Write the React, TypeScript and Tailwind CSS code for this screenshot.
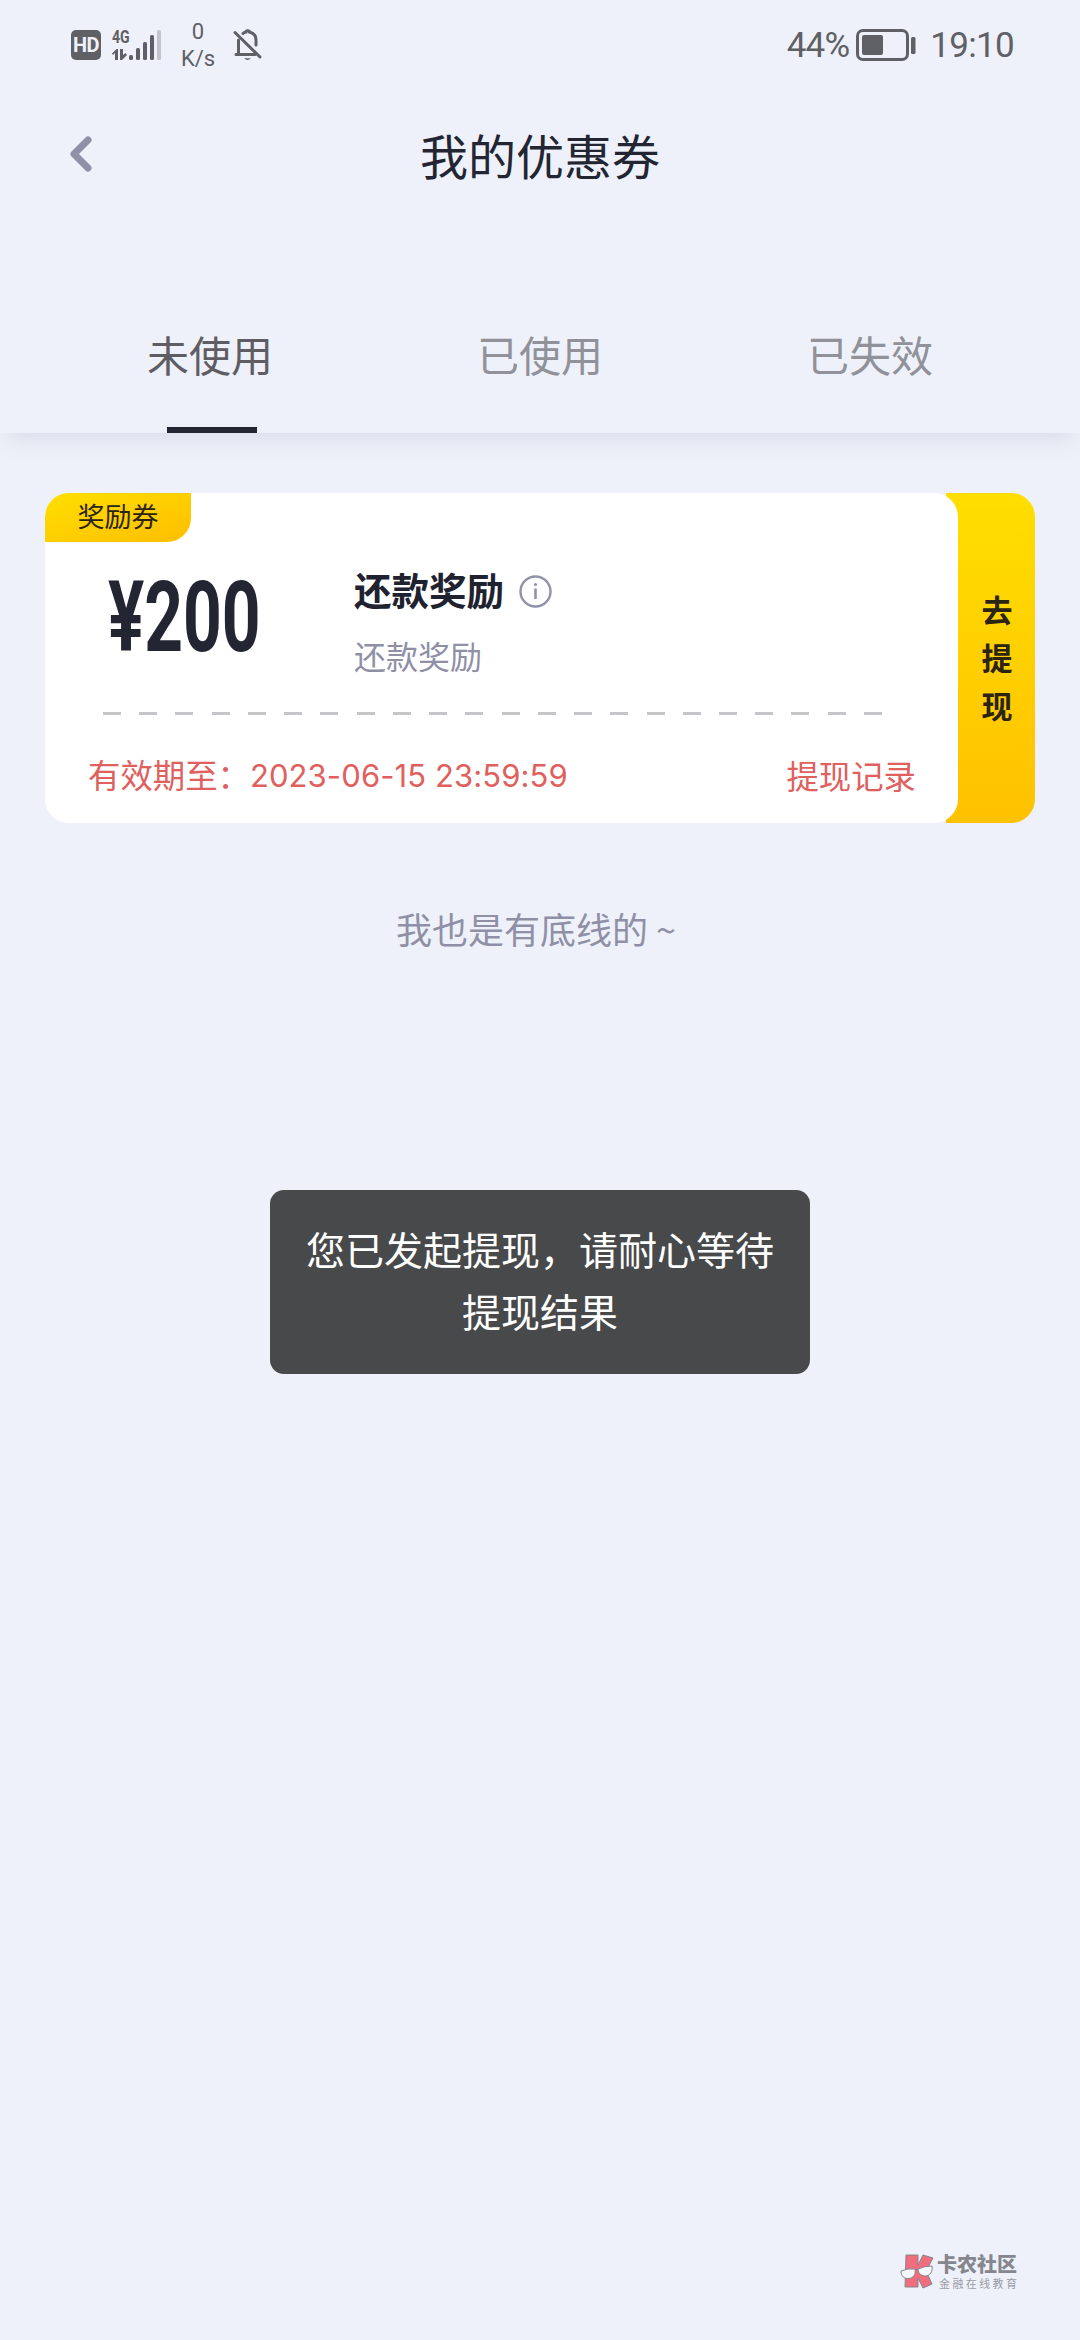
import { ChevronLeft } from 'lucide-react';

const tabs = [
  { label: '未使用', active: true },
  { label: '已使用', active: false },
  { label: '已失效', active: false },
];

function StatusBar() {
  return (
    <header className="h-[88px] flex items-center justify-between pl-[71px] pr-[66px] text-[#5e6066] font-['Roboto',sans-serif]">
      <div className="flex items-center h-full pt-[2px]">
        <div className="w-[30px] h-[30px] rounded-[5px] bg-[#5e6066] text-[#eef1f9] text-[20px] font-bold leading-[31px] text-center tracking-[-0.5px]">
          HD
        </div>
        <div className="ml-[11px] w-[50px] h-[32px] flex flex-col">
          <span className="block w-[30px] h-[15px] text-[19px] font-bold leading-[15px] origin-left scale-x-[0.74]">4G</span>
          <svg className="-mt-[15px]" width="50" height="32" viewBox="0 0 50 32" fill="#5e6066">
            <path d="M0 24.5 4.5 20H6v11H3v-7l-2 2zM8 20h3v6l2.5-2 1.5 2-5 5H8z" />
            <rect x="17" y="26" width="4" height="5" rx="1.5" />
            <rect x="24" y="19" width="4" height="12" rx="1.5" />
            <rect x="31" y="13" width="4" height="18" rx="1.5" />
            <rect x="38" y="6" width="4" height="25" rx="1.5" />
            <rect x="45" y="1" width="4" height="30" rx="1.5" fill="#c3c5cd" />
          </svg>
        </div>
        <div className="ml-[18px] w-[36px] flex flex-col text-center text-[22px] leading-[27px]">
          <span>0</span>
          <span>K/s</span>
        </div>
        <svg className="ml-[17px]" width="30" height="34" viewBox="0 0 30 34" fill="none" stroke="#5e6066" strokeWidth="3" strokeLinecap="round">
          <path d="M2 4.5 27 29" />
          <path d="M5.5 12v13.5M3 26.5h19" />
          <path d="M10 5.5c1-1 2.2-1.500 3-1.500 0-1.800 3.500-1.800 3.500 0 4 1 6.500 4 6.500 8v5" />
          <path d="M11 30.200h7q-3.500 3.600-7 0z" fill="#5e6066" stroke="none" />
        </svg>
      </div>
      <div className="flex items-center h-full pt-[2px]">
        <span className="pt-[2px] text-[35px] leading-[40px] tracking-[-0.800px]">44%</span>
        <svg className="ml-[7px]" width="61" height="34" viewBox="0 0 61 34" fill="none">
          <rect x="1.500" y="2.500" width="50" height="29" rx="5.500" stroke="#5e6066" strokeWidth="3" />
          <rect x="6" y="7" width="21" height="20" rx="2" fill="#5e6066" />
          <rect x="55" y="9" width="4.500" height="17" rx="1.500" fill="#5e6066" />
        </svg>
        <span className="ml-[13px] pt-[2px] text-[35px] leading-[40px] tracking-[-0.700px]">19:10</span>
      </div>
    </header>
  );
}

function InfoIcon() {
  return (
    <svg width="33" height="33" viewBox="0 0 33 33" fill="none">
      <circle cx="16.500" cy="16.500" r="15" stroke="#9192a8" strokeWidth="2.400" />
      <circle cx="16.500" cy="9.500" r="1.600" fill="#9192a8" />
      <path d="M16.500 13.500v10.500" stroke="#9192a8" strokeWidth="2.600" />
    </svg>
  );
}

function CouponCard() {
  return (
    <div className="mx-[45px] h-[330px] flex">
      <div className="relative z-10 w-[913px] flex flex-col bg-white rounded-[24px]">
        <div className="w-[146px] h-[49px] rounded-tl-[24px] rounded-br-[24px] bg-linear-to-br from-[#ffdf00] to-[#ffbe00] text-[27px] leading-[46px] text-center text-[#2b2413]">
          奖励券
        </div>
        <div className="h-[170px] flex">
          <div className="w-[309px] pl-[63px] pt-[26px]">
            <span className="block w-[240px] origin-left scale-x-[0.69] whitespace-nowrap font-['Roboto',sans-serif] font-bold text-[98px] leading-[100px] text-[#232532]">
              ¥200
            </span>
          </div>
          <div className="flex flex-col">
            <div className="mt-[19px] h-[56px] flex items-center gap-[15px]">
              <h2 className="text-[37.500px] leading-[56px] font-bold text-[#20222f]">还款奖励</h2>
              <div className="pt-[5px]">
                <InfoIcon />
              </div>
            </div>
            <p className="mt-[14px] text-[32px] leading-[48px] text-[#8f90a6]">还款奖励</p>
          </div>
        </div>
        <div className="ml-[58px] w-[779px] h-[3px] flex justify-between">
          {Array.from({ length: 22 }, (_, i) => (
            <span key={i} className="w-[18px] h-[3px] bg-[#c6c6ca]" />
          ))}
        </div>
        <div className="mt-[35px] pl-[43px] pr-[42px] flex items-center justify-between text-[32.400px] leading-[48px] text-[#e0605e]">
          <div className="flex">
            <span>有效期至：</span>
            <span className="pt-[2px] font-['Inter',sans-serif] text-[31px] tracking-[0.100px] whitespace-nowrap">2023-06-15 23:59:59</span>
          </div>
          <a>提现记录</a>
        </div>
      </div>
      <button className="-ml-[12px] w-[89px] pl-[13px] pb-[3px] flex flex-col items-center justify-center rounded-r-[24px] bg-linear-to-b from-[#ffde00] to-[#ffc100] text-[31px] leading-[48px] font-bold text-[#2b2413]">
        <span>去</span>
        <span>提</span>
        <span>现</span>
      </button>
    </div>
  );
}

function Watermark() {
  return (
    <div className="flex items-center gap-[3px] pl-[900px] h-[44px]">
      <svg width="34" height="38" viewBox="0 0 34 38" fill="none" stroke="#85858f" strokeWidth="1">
        <path d="M6 3h12v10l5-10 10 3-7 13 6 13-9 4-5-10v9H5z" fill="#ef6d7d" />
        <path d="M1 19q7-3 14-2c1 6-2 9-6 9.500C4 27 1 24 1 19zM18 17q6-3 14-3c1 6-2 9-6 10-4 0-8-2-8-7z" fill="#f6f7fb" />
        <path d="M15 17.500h3" />
      </svg>
      <div className="flex flex-col">
        <span className="text-[20px] leading-[24px] font-black text-[#85868e]">卡农社区</span>
        <span className="text-[11px] leading-[16px] -mt-[1px] pl-[2px] tracking-[2.400px] text-[#9a9ba5]">金融在线教育</span>
      </div>
    </div>
  );
}

export default function App() {
  return (
    <div className="relative w-[1080px] h-[2340px] flex flex-col overflow-hidden bg-[#eef1f9] font-['Noto_Sans_CJK_SC',sans-serif]">
      <StatusBar />

      <nav className="h-[135px] pb-[4px] grid grid-cols-[200px_1fr_200px] items-center">
        <ChevronLeft className="ml-[53px] w-[56px] h-[56px] text-[#9090a6]" strokeWidth={3} />
        <h1 className="text-center text-[48px] leading-[72px] text-[#232532]">我的优惠券</h1>
      </nav>

      <div className="h-[210px] px-[45px] pt-[70px] flex shadow-[0_14px_20px_-6px_#dcdfec]">
        {tabs.map((tab) => (
          <div key={tab.label} className="w-[330px] flex flex-col items-center justify-between">
            <span className={tab.active ? 'mt-[29px] text-[42px] leading-[64px] text-[#5f5d64]' : 'mt-[29px] text-[42px] leading-[64px] text-[#909199]'}>
              {tab.label}
            </span>
            {tab.active && <span className="ml-[4px] w-[90px] h-[6px] bg-[#232532]" />}
          </div>
        ))}
      </div>

      <main className="pt-[60px]">
        <CouponCard />
        <p className="mt-[78px] pl-[396px] text-[36px] leading-[54px] text-[#8f90a6]">我也是有底线的 ~</p>
      </main>

      <div className="mt-auto mb-[47px]">
        <Watermark />
      </div>

      {/* toast */}
      <div className="absolute left-[270px] top-[1190px] w-[540px] h-[184px] px-[30px] py-[27px] rounded-[14px] bg-[#48494b] text-center text-[39px] leading-[62px] text-white">
        您已发起提现，请耐心等待提现结果
      </div>
    </div>
  );
}
